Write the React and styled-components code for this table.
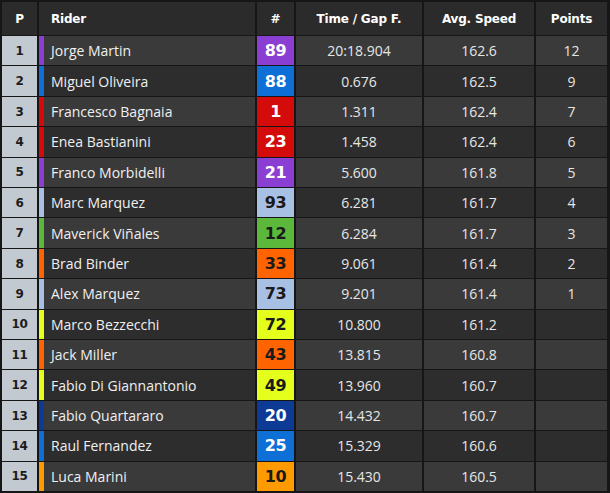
import React from "react";
import styled, { createGlobalStyle } from "styled-components";

const GlobalStyle = createGlobalStyle`
  html, body {
    margin: 0;
    padding: 0;
    background: #161616;
  }
  * {
    box-sizing: border-box;
  }
`;

const COLUMNS = "35px 216px 37px 126px 110px 71px";

const Table = styled.div`
  display: flex;
  flex-direction: column;
  gap: 1px;
  width: 610px;
  height: 493px;
  padding: 2px 3px 2px 2px;
  background: #161616;
  font-family: "Open Sans", "Liberation Sans", sans-serif;
`;

const Row = styled.div`
  display: grid;
  grid-template-columns: ${COLUMNS};
  column-gap: 2px;
  flex: ${props => (props.header ? "0 0 33px" : "1 1 0")};
`;

const HeadCell = styled.div`
  display: flex;
  align-items: center;
  justify-content: ${props => (props.left ? "flex-start" : "center")};
  padding-left: ${props => (props.left ? "12px" : "0")};
  background: #2b2b2b;
  color: #ffffff;
  font-family: "DejaVu Sans", Verdana, sans-serif;
  font-weight: bold;
  font-size: 12px;
  letter-spacing: -0.2px;
`;

const PosCell = styled.div`
  display: flex;
  align-items: center;
  justify-content: center;
  background: #c2c9d1;
  color: #1c1c1c;
  font-family: "DejaVu Sans", Verdana, sans-serif;
  font-weight: bold;
  font-size: 12px;
  letter-spacing: -0.3px;
`;

const RiderCell = styled.div`
  display: flex;
  align-items: center;
  padding-left: 7px;
  border-left: 5px solid ${props => props.stripe};
  background: ${props => (props.odd ? "#3a3a3a" : "#2d2d2d")};
  color: #f0f0f0;
  font-size: 14px;
  font-weight: 500;
  white-space: nowrap;
`;

const NumCell = styled.div`
  display: flex;
  align-items: center;
  justify-content: center;
  background: ${props => props.bg};
  color: ${props => (props.dark ? "#1a1a1a" : "#ffffff")};
  font-family: "DejaVu Sans", Verdana, sans-serif;
  font-weight: 900;
  font-size: 16px;
  letter-spacing: -0.5px;
`;

const DataCell = styled.div`
  display: flex;
  align-items: center;
  justify-content: center;
  background: ${props => (props.odd ? "#3a3a3a" : "#2d2d2d")};
  color: #e6e6e6;
  font-size: 14px;
  font-weight: 500;
`;

const PURPLE = "#8b3fd2";
const BLUE = "#0e6fd6";
const RED = "#d40b0b";
const LIGHTBLUE = "#a9c0e5";
const GREEN = "#5cb83b";
const ORANGE = "#ff6400";
const YELLOW = "#e4ff1c";
const NAVY = "#0d3a95";
const AMBER = "#ff9a00";

const results = [
  { name: "Jorge Martin", num: 89, color: PURPLE, time: "20:18.904", speed: "162.6", pts: "12" },
  { name: "Miguel Oliveira", num: 88, color: BLUE, time: "0.676", speed: "162.5", pts: "9" },
  { name: "Francesco Bagnaia", num: 1, color: RED, time: "1.311", speed: "162.4", pts: "7" },
  { name: "Enea Bastianini", num: 23, color: RED, time: "1.458", speed: "162.4", pts: "6" },
  { name: "Franco Morbidelli", num: 21, color: PURPLE, time: "5.600", speed: "161.8", pts: "5" },
  { name: "Marc Marquez", num: 93, color: LIGHTBLUE, dark: true, time: "6.281", speed: "161.7", pts: "4" },
  { name: "Maverick Viñales", num: 12, color: GREEN, dark: true, time: "6.284", speed: "161.7", pts: "3" },
  { name: "Brad Binder", num: 33, color: ORANGE, dark: true, time: "9.061", speed: "161.4", pts: "2" },
  { name: "Alex Marquez", num: 73, color: LIGHTBLUE, dark: true, time: "9.201", speed: "161.4", pts: "1" },
  { name: "Marco Bezzecchi", num: 72, color: YELLOW, dark: true, time: "10.800", speed: "161.2", pts: "" },
  { name: "Jack Miller", num: 43, color: ORANGE, dark: true, time: "13.815", speed: "160.8", pts: "" },
  { name: "Fabio Di Giannantonio", num: 49, color: YELLOW, dark: true, time: "13.960", speed: "160.7", pts: "" },
  { name: "Fabio Quartararo", num: 20, color: NAVY, time: "14.432", speed: "160.7", pts: "" },
  { name: "Raul Fernandez", num: 25, color: BLUE, time: "15.329", speed: "160.6", pts: "" },
  { name: "Luca Marini", num: 10, color: AMBER, dark: true, time: "15.430", speed: "160.5", pts: "" }
];

const App = () => {
  return (
    <>
      <GlobalStyle />
      <Table>
        <Row header>
          <HeadCell>P</HeadCell>
          <HeadCell left>Rider</HeadCell>
          <HeadCell>#</HeadCell>
          <HeadCell>Time / Gap F.</HeadCell>
          <HeadCell>Avg. Speed</HeadCell>
          <HeadCell>Points</HeadCell>
        </Row>

        {results.map((r, i) => {
          const odd = i % 2 === 0;
          return (
            <Row key={r.num}>
              <PosCell>{i + 1}</PosCell>
              <RiderCell stripe={r.color} odd={odd}>
                {r.name}
              </RiderCell>
              <NumCell bg={r.color} dark={r.dark}>
                {r.num}
              </NumCell>
              <DataCell odd={odd}>{r.time}</DataCell>
              <DataCell odd={odd}>{r.speed}</DataCell>
              <DataCell odd={odd}>{r.pts}</DataCell>
            </Row>
          );
        })}
      </Table>
    </>
  );
};

export default App;
